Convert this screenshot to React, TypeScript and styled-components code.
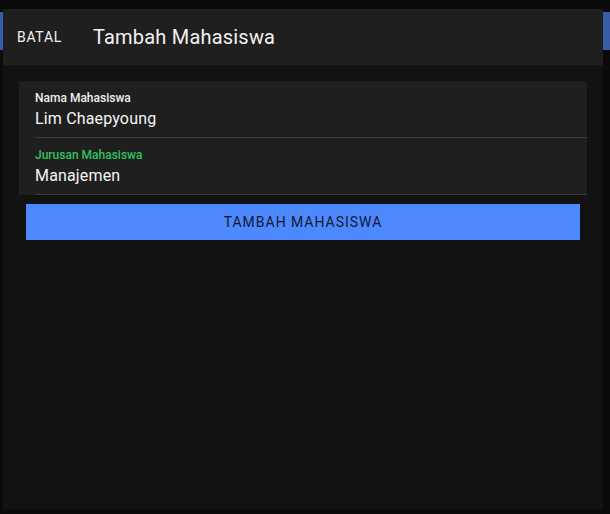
import styled, { createGlobalStyle } from 'styled-components';

const GlobalStyle = createGlobalStyle`
  * {
    box-sizing: border-box;
  }
  body {
    margin: 0;
    background: #0a0a0a;
    font-family: Roboto, 'Noto Sans', sans-serif;
  }
`;

const Screen = styled.div`
  position: relative;
  width: 610px;
  height: 514px;
  overflow: hidden;
  background: #0a0a0a;
  padding-top: 12px;
`;

const AppBar = styled.div`
  height: 38px;
  background: #3a5ea6;
`;

const Modal = styled.div`
  position: absolute;
  left: 3px;
  top: 9px;
  width: 600px;
  height: 500px;
  background: #121212;
  display: flex;
  flex-direction: column;
`;

const Header = styled.header`
  height: 56px;
  background: #1f1f1f;
  display: flex;
  align-items: center;
  padding-left: 14px;
`;

const CancelButton = styled.button`
  background: none;
  border: none;
  padding: 0;
  color: #f2f2f2;
  font-family: inherit;
  font-size: 14px;
  font-weight: 400;
  letter-spacing: 0.05em;
  text-transform: uppercase;
  width: 76px;
  text-align: left;
`;

const Title = styled.h1`
  margin: 0;
  color: #f2f2f2;
  font-size: 20px;
  font-weight: 400;
  letter-spacing: 0.01em;
`;

const Body = styled.div`
  padding: 16px;
  display: flex;
  flex-direction: column;
`;

const Card = styled.div`
  background: #1f1f1f;
  display: flex;
  flex-direction: column;
`;

const Field = styled.label`
  display: flex;
  flex-direction: column;
  margin-left: 16px;
  padding: 10px 0 8px;
  border-bottom: 1px solid #3a3a3a;
`;

const FieldLabel = styled.span<{ $focused?: boolean }>`
  font-size: 12px;
  line-height: 14px;
  font-weight: 500;
  color: ${p => (p.$focused ? '#2dc460' : '#f0f0f0')};
`;

const FieldValue = styled.input`
  margin-top: 2px;
  height: 22px;
  padding: 0;
  background: transparent;
  border: none;
  outline: none;
  color: #f5f5f5;
  font-family: inherit;
  font-size: 16px;
  letter-spacing: 0.01em;
`;

const SubmitButton = styled.button`
  margin: 9px 7px 0;
  height: 36px;
  background: #4d88ff;
  border: none;
  color: #111a2e;
  font-family: inherit;
  font-size: 14px;
  letter-spacing: 0.07em;
  text-transform: uppercase;
`;

export default function App() {
  return (
    <>
      <GlobalStyle />
      <Screen>
        <AppBar />
        <Modal>
          <Header>
            <CancelButton>Batal</CancelButton>
            <Title>Tambah Mahasiswa</Title>
          </Header>
          <Body>
            <Card>
              <Field>
                <FieldLabel>Nama Mahasiswa</FieldLabel>
                <FieldValue defaultValue="Lim Chaepyoung" />
              </Field>
              <Field>
                <FieldLabel $focused>Jurusan Mahasiswa</FieldLabel>
                <FieldValue defaultValue="Manajemen" />
              </Field>
            </Card>
            <SubmitButton>Tambah Mahasiswa</SubmitButton>
          </Body>
        </Modal>
      </Screen>
    </>
  );
}
